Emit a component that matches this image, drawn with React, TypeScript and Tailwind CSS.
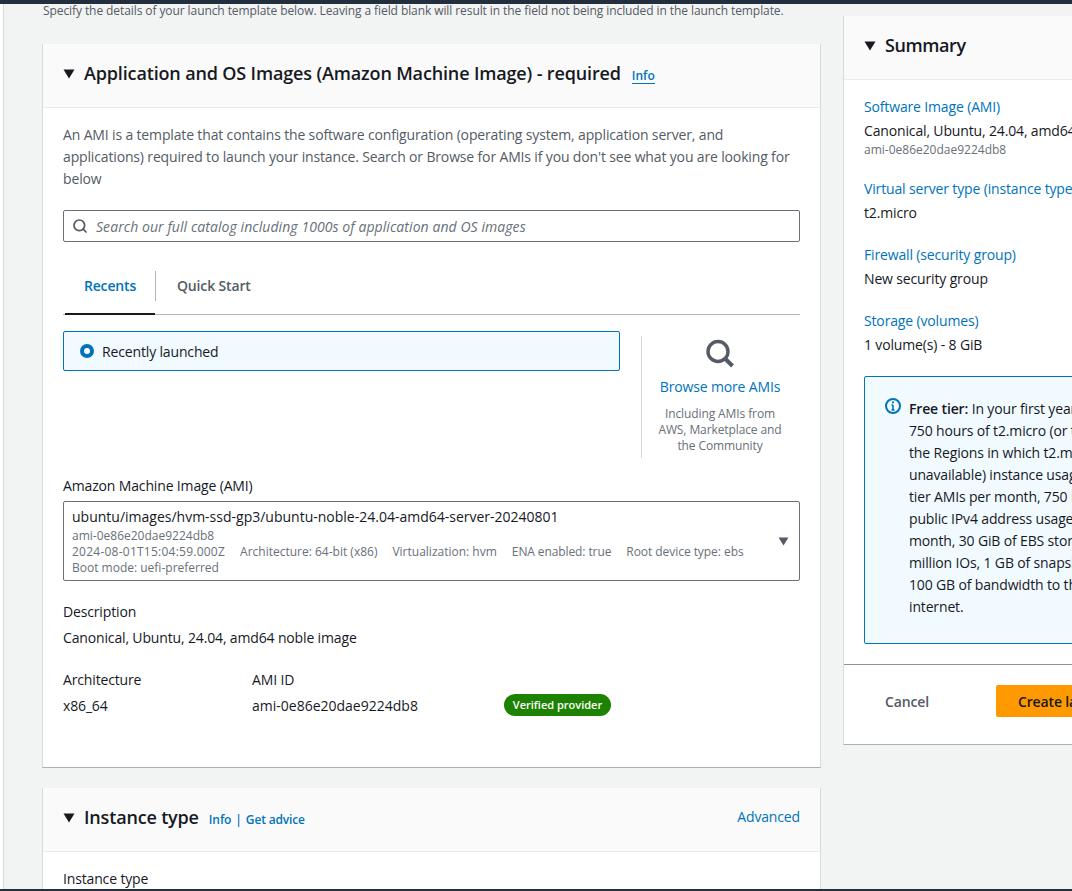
import type { ReactNode } from 'react'
import { Search } from 'lucide-react'

function Caret({ className }: { className: string }) {
  return (
    <svg className={className} viewBox="0 0 12 10" fill="currentColor">
      <path d="M0.5 0.5h11L6 9.5z" />
    </svg>
  )
}

function CardHeader({ children, right }: { children: ReactNode; right?: ReactNode }) {
  return (
    <div className="flex h-[64px] items-center border-b border-[#eaeded] bg-[#fafafa] pb-1 pl-5 pr-5">
      <Caret className="mr-[9px] h-[10px] w-[12px] shrink-0 text-[#16191f]" />
      <div className="mb-[2px] flex flex-1 items-baseline">{children}</div>
      {right}
    </div>
  )
}

function SummaryItem({ label, value, sub }: { label: string; value: string; sub?: string }) {
  return (
    <div className="mt-[21px] first:mt-0">
      <div className="whitespace-nowrap text-[14px] leading-[20px] text-[#0073bb]">{label}</div>
      <div className="mt-[3px] whitespace-nowrap text-[14px] leading-[22px] text-[#16191f]">{value}</div>
      {sub && <div className="mt-px pb-px text-[12px] leading-[14px] tracking-normal text-[#687078]">{sub}</div>}
    </div>
  )
}

function ImageCard() {
  return (
    <section className="h-[724px] border-x border-b border-x-[#d5dbdb] border-b-[#a9b2b2] bg-white">
      <CardHeader>
        <h2 className="whitespace-nowrap text-[18px] font-semibold leading-[24px] tracking-[-0.15px] text-[#16191f]">
          Application and OS Images (Amazon Machine Image) - required
        </h2>
        <a className="ml-[11px] border-b border-[#0073bb] text-[12px] font-semibold leading-[14px] tracking-normal text-[#0073bb]">Info</a>
      </CardHeader>
      <div className="px-5 pt-[16px]">
        <p className="whitespace-nowrap text-[14px] leading-[22px] text-[#545b64]">
          An AMI is a template that contains the software configuration (operating system, application server, and
          <br />
          applications) required to launch your instance. Search or Browse for AMIs if you don't see what you are looking for
          <br />
          below
        </p>

        <div className="mt-[20px] flex h-[32px] items-center rounded-[2px] border border-[#687078] pl-2">
          <Search className="h-[16px] w-[16px] text-[#545b64]" strokeWidth={2.6} />
          <span className="ml-2 text-[14px] italic tracking-[0.07px] text-[#687078]">
            Search our full catalog including 1000s of application and OS images
          </span>
        </div>

        <div className="mt-[28px] flex h-[45px] border-b border-[#aab7b8]">
          <div className="ml-[2px] flex h-[45px] w-[90px] items-start justify-center border-b-2 border-[#16191f]">
            <span className="mt-[7px] text-[14px] font-semibold leading-[18px] text-[#0073bb]">Recents</span>
          </div>
          <div className="mt-px h-[30px] w-px bg-[#aab7b8]" />
          <span className="ml-[21px] mt-[7px] text-[14px] font-semibold leading-[18px] text-[#545b64]">Quick Start</span>
        </div>

        <div className="mt-[16px] flex h-[145px]">
          <div className="flex h-[40px] w-[557px] items-center rounded-[2px] border border-[#0073bb] bg-[#f1faff] pl-[16px]">
            <span className="flex h-[14px] w-[14px] items-center justify-center rounded-full bg-[#0073bb]">
              <span className="h-[6px] w-[6px] rounded-full bg-white" />
            </span>
            <span className="ml-[8px] text-[14px] text-[#16191f]">Recently launched</span>
          </div>
          <div className="ml-[21px] mt-[5px] flex h-[122px] flex-1 flex-col items-center border-l border-[#d5dbdb] pr-[2px]">
            <svg className="mt-[2px] h-[32px] w-[32px] text-[#545b64]" viewBox="0 0 32 32" fill="none" stroke="currentColor">
              <circle cx="14" cy="13.5" r="10" strokeWidth="3.4" />
              <path d="M21 20.5 28.5 28" strokeWidth="4" />
            </svg>
            <a className="mt-[7px] text-[14px] leading-[20px] text-[#0073bb]">Browse more AMIs</a>
            <p className="mt-[9px] text-center text-[12px] leading-[16px] tracking-[-0.1px] text-[#687078]">
              Including AMIs from
              <br />
              AWS, Marketplace and
              <br />
              the Community
            </p>
          </div>
        </div>

        <div className="text-[14px] leading-[20px] text-[#16191f]">Amazon Machine Image (AMI)</div>
        <div className="mt-[5px] flex h-[80px] items-center rounded-[2px] border border-[#687078] pl-2 pr-[10px]">
          <div className="flex-1">
            <div className="text-[14px] leading-[22px] tracking-normal text-[#16191f]">
              ubuntu/images/hvm-ssd-gp3/ubuntu-noble-24.04-amd64-server-20240801
            </div>
            <div className="text-[12px] leading-[16px] tracking-normal text-[#687078]">ami-0e86e20dae9224db8</div>
            <div className="flex gap-[15px] text-[12px] leading-[16px] tracking-normal text-[#687078]">
              <span className="tracking-[0.24px]">2024-08-01T15:04:59.000Z</span>
              <span>Architecture: 64-bit (x86)</span>
              <span>Virtualization: hvm</span>
              <span className="tracking-[-0.1px]">ENA enabled: true</span>
              <span className="tracking-[-0.05px]">Root device type: ebs</span>
            </div>
            <div className="text-[12px] leading-[16px] tracking-normal text-[#687078]">Boot mode: uefi-preferred</div>
          </div>
          <Caret className="h-[9px] w-[11px] text-[#545b64]" />
        </div>

        <div className="mt-[21px] text-[14px] leading-[20px] text-[#16191f]">Description</div>
        <div className="mt-[6px] text-[14px] leading-[20px] text-[#16191f]">Canonical, Ubuntu, 24.04, amd64 noble image</div>

        <div className="mt-[22px] flex">
          <div className="w-[189px]">
            <div className="text-[14px] leading-[20px] text-[#16191f]">Architecture</div>
            <div className="mt-[6px] text-[14px] leading-[20px] text-[#16191f]">x86_64</div>
          </div>
          <div className="w-[252px]">
            <div className="text-[14px] leading-[20px] text-[#16191f]">AMI ID</div>
            <div className="mt-[6px] text-[14px] leading-[20px] tracking-normal text-[#16191f]">ami-0e86e20dae9224db8</div>
          </div>
          <div className="mt-[24px] flex h-[22px] w-[107px] items-center justify-center rounded-full bg-[#1d8102] text-[11px] font-semibold tracking-normal text-white">
            Verified provider
          </div>
        </div>
      </div>
    </section>
  )
}

function InstanceCard() {
  return (
    <section className="mt-[20px] h-[200px] border-x border-[#d5dbdb] bg-white">
      <CardHeader right={<a className="mb-[2px] text-[14px] text-[#0073bb]">Advanced</a>}>
        <h2 className="text-[18px] font-semibold leading-[24px] tracking-[-0.17px] text-[#16191f]">Instance type</h2>
        <a className="ml-[10px] text-[12px] font-semibold tracking-[-0.1px] text-[#0073bb]">Info</a>
        <span className="mx-[4px] text-[12px] font-semibold text-[#0073bb]">|</span>
        <a className="text-[12px] font-semibold text-[#0073bb]">Get advice</a>
      </CardHeader>
      <div className="px-5 pt-[17px] text-[14px] leading-[20px] text-[#16191f]">Instance type</div>
    </section>
  )
}

function SummaryCard() {
  return (
    <aside className="ml-[22px] mt-[12px] h-[729px] w-[340px] shrink-0 border-b border-l border-[#a9b2b2] border-l-[#d5dbdb] bg-white">
      <div className="flex h-[64px] items-center border-b border-[#eaeded] bg-[#fafafa] pb-1 pl-5">
        <Caret className="mr-[9px] h-[10px] w-[12px] text-[#16191f]" />
        <h2 className="mb-[2px] text-[18px] font-semibold leading-[24px] tracking-[-0.4px] text-[#16191f]">Summary</h2>
      </div>
      <div className="h-[585px] overflow-hidden border-b border-[#879596] pl-5 pt-[17px]">
        <div>
          <SummaryItem label="Software Image (AMI)" value="Canonical, Ubuntu, 24.04, amd64..." sub="ami-0e86e20dae9224db8" />
          <SummaryItem label="Virtual server type (instance type)" value="t2.micro" />
          <SummaryItem label="Firewall (security group)" value="New security group" />
          <SummaryItem label="Storage (volumes)" value="1 volume(s) - 8 GiB" />
        </div>
        <div className="mt-[20px] flex h-[268px] w-[300px] rounded-[2px] border border-[#0073bb] bg-[#f1faff] pl-[20px] pt-[21px]">
          <svg className="h-[16px] w-[16px] shrink-0 text-[#0073bb]" viewBox="0 0 16 16" fill="none" stroke="currentColor">
            <circle cx="8" cy="8" r="7" strokeWidth="2" />
            <path d="M8 7v5M6.5 12h3M6.5 7H8" strokeWidth="1.6" />
            <path d="M8 3.4v1.8" strokeWidth="2" />
          </svg>
          <p className="ml-[8px] whitespace-nowrap text-[14px] leading-[22px] text-[#16191f]">
            <strong className="font-semibold">Free tier:</strong> In your first year includes
            <br />
            750 hours of t2.micro (or t3.micro in
            <br />
            the Regions in which t2.micro is
            <br />
            unavailable) instance usage on free
            <br />
            tier AMIs per month, 750 hours of
            <br />
            public IPv4 address usage per
            <br />
            month, 30 GiB of EBS storage, 2
            <br />
            million IOs, 1 GB of snapshots, and
            <br />
            100 GB of bandwidth to the
            <br />
            internet.
          </p>
        </div>
      </div>
      <div className="flex h-[79px] items-center pb-[7px] pl-[41px]">
        <span className="w-[111px] text-[14px] font-semibold text-[#545b64]">Cancel</span>
        <div className="flex h-[32px] w-[170px] items-center whitespace-nowrap rounded-[2px] bg-[#ff9900] pl-[22px] text-[14px] font-semibold text-[#16191f]">
          Create launch template
        </div>
      </div>
    </aside>
  )
}

export default function App() {
  return (
    <div className="flex h-[891px] w-[1072px] flex-col overflow-hidden bg-[#f2f3f3] font-['Open_Sans','Noto_Sans',sans-serif] tracking-[-0.15px]">
      <div className="h-[4px] shrink-0 bg-[#232f3e]" />
      <div className="flex min-h-0 flex-1 overflow-hidden">
        <div className="w-[3px] shrink-0 bg-white" />
        <div className="flex flex-1 overflow-hidden border-l border-[#d5dbdb] pl-[38px]">
          <div className="w-[779px] shrink-0">
            <p className="ml-px h-[40px] whitespace-nowrap text-[12px] leading-[14px] tracking-[-0.085px] text-[#545b64]">
              Specify the details of your launch template below. Leaving a field blank will result in the field not being included in the launch template.
            </p>
            <ImageCard />
            <InstanceCard />
          </div>
          <SummaryCard />
        </div>
      </div>
      <div className="h-[2px] shrink-0 bg-[#232f3e]" />
    </div>
  )
}
